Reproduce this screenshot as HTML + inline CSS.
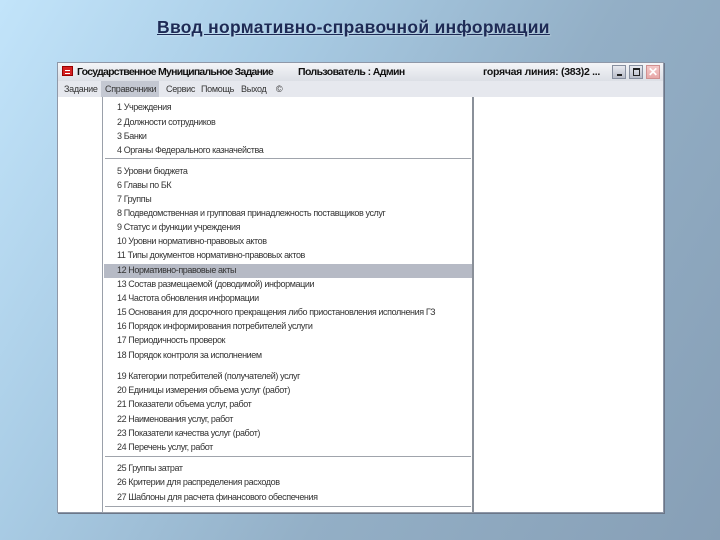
<!DOCTYPE html>
<html><head><meta charset="utf-8"><style>
*{margin:0;padding:0;box-sizing:border-box}
body{width:720px;height:540px;overflow:hidden;position:relative;
background:linear-gradient(120deg,#c2e4fa 0%,#a8cbe4 30%,#93afc6 60%,#879fb6 100%);
font-family:"Liberation Sans",sans-serif}
h1{position:absolute;left:157px;top:17px;font-size:17.5px;font-weight:bold;color:#1d2a55;text-decoration:underline;letter-spacing:0.3px;text-shadow:1px 1px 1px rgba(255,255,255,.35)}
.win{position:absolute;left:57px;top:62px;width:607px;height:451px;background:#fff;border:1px solid #8f98a8;box-shadow:1px 1px 0 #6b7688}
.title{position:absolute;left:0;top:0;width:605px;height:18px;background:linear-gradient(#f4f5f8,#dcdfe6);font-size:10.5px;font-weight:bold;color:#111;white-space:nowrap}
.title span{position:absolute;top:3px}
.ico{position:absolute;left:4px;top:3px;width:11px;height:10px;background:#d42020;border:1px solid #900}
.ico:after{content:"";position:absolute;left:2px;top:3px;width:5px;height:2px;border-top:1px solid #fff;border-bottom:1px solid #fff}
.btn{position:absolute;top:2px;width:14px;height:14px;border:1px solid #8890a0;background:linear-gradient(#e8eaf0,#b8bcc8)}
.menu{position:absolute;left:0;top:18px;width:605px;height:16px;background:#e6e8ee;font-size:9px;color:#333;letter-spacing:-0.3px}
.menu span{position:absolute;top:3px}
.sel{position:absolute;left:43px;top:0;width:58px;height:16px;background:#c4c8d2}
.dd{position:absolute;left:44px;top:34px;width:372px;height:416px;background:#fff;border-left:1px solid #9aa0aa;border-right:2px solid #8a9099;border-bottom:1px solid #9aa0aa;font-size:9px;color:#333}
.it{position:absolute;left:14px;white-space:nowrap;letter-spacing:-0.4px}
.sep{position:absolute;left:2px;width:366px;height:2px;border-top:1px solid #a0a4ac;border-bottom:1px solid #fff}
.hl{position:absolute;left:1px;top:167px;width:368px;height:14px;background:#b6bac5}
</style></head><body>
<h1>Ввод нормативно-справочной информации</h1>
<div class="win">
 <div class="title"><div class="ico"></div>
  <span style="left:19px;letter-spacing:-0.75px">Государственное Муниципальное Задание</span>
  <span style="left:240px;letter-spacing:-0.6px">Пользователь : Админ</span>
  <span style="left:425px;letter-spacing:-0.3px">горячая линия: (383)2 ...</span>
  <div class="btn" style="left:554px"><div style="position:absolute;left:4px;top:8px;width:5px;height:2px;background:#222"></div></div>
  <div class="btn" style="left:571px"><div style="position:absolute;left:3px;top:2px;width:7px;height:8px;border:1px solid #222;border-top-width:2px"></div></div>
  <div class="btn" style="left:588px;background:linear-gradient(#f4c8c8,#e8a8a8);border-color:#d09090;color:#fff;font-size:12px;line-height:12px;text-align:center">✕</div>
 </div>
 <div class="menu"><div class="sel"></div>
  <span style="left:6px">Задание</span><span style="left:47px">Справочники</span><span style="left:108px">Сервис</span><span style="left:143px">Помощь</span><span style="left:183px">Выход</span><span style="left:218px">©</span>
 </div>
 <div class="dd">
  <div class="hl"></div>
  <div class="it" style="top:5px">1 Учреждения</div>
  <div class="it" style="top:20px">2 Должности сотрудников</div>
  <div class="it" style="top:34px">3 Банки</div>
  <div class="it" style="top:48px">4 Органы Федерального казначейства</div>
  <div class="sep" style="top:61px"></div>
  <div class="it" style="top:69px">5 Уровни бюджета</div>
  <div class="it" style="top:83px">6 Главы по БК</div>
  <div class="it" style="top:97px">7 Группы</div>
  <div class="it" style="top:111px">8 Подведомственная и групповая принадлежность поставщиков услуг</div>
  <div class="it" style="top:125px">9 Статус и функции учреждения</div>
  <div class="it" style="top:139px">10 Уровни нормативно-правовых актов</div>
  <div class="it" style="top:153px">11 Типы документов нормативно-правовых актов</div>
  <div class="it" style="top:168px">12 Нормативно-правовые акты</div>
  <div class="it" style="top:182px">13 Состав размещаемой (доводимой) информации</div>
  <div class="it" style="top:196px">14 Частота обновления информации</div>
  <div class="it" style="top:210px">15 Основания для досрочного прекращения либо приостановления исполнения ГЗ</div>
  <div class="it" style="top:224px">16 Порядок информирования потребителей услуги</div>
  <div class="it" style="top:238px">17 Периодичность проверок</div>
  <div class="it" style="top:253px">18 Порядок контроля за исполнением</div>
  <div class="it" style="top:274px">19 Категории потребителей (получателей) услуг</div>
  <div class="it" style="top:288px">20 Единицы измерения объема услуг (работ)</div>
  <div class="it" style="top:302px">21 Показатели объема услуг, работ</div>
  <div class="it" style="top:317px">22 Наименования услуг, работ</div>
  <div class="it" style="top:331px">23 Показатели качества услуг (работ)</div>
  <div class="it" style="top:345px">24 Перечень услуг, работ</div>
  <div class="sep" style="top:359px"></div>
  <div class="it" style="top:366px">25 Группы затрат</div>
  <div class="it" style="top:380px">26 Критерии для распределения расходов</div>
  <div class="it" style="top:395px">27 Шаблоны для расчета финансового обеспечения</div>
  <div class="sep" style="top:409px"></div>
 </div>
</div>
</body></html>
